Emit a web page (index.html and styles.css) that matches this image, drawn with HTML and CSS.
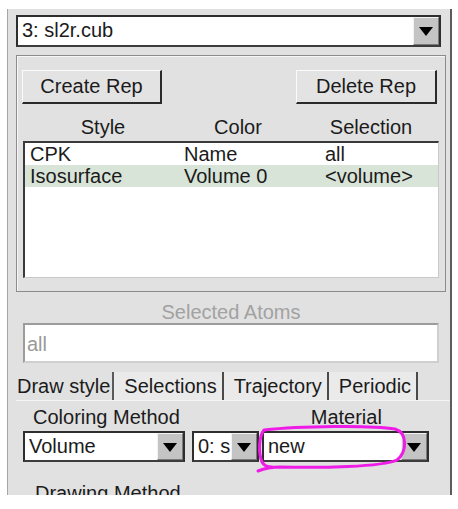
FILE: index.html
```html
<!DOCTYPE html>
<html>
<head>
<meta charset="utf-8">
<link rel="stylesheet" href="styles.css">
</head>
<body>
<div class="panel">
  <div class="combo top-combo"><span class="val">3: sl2r.cub</span><span class="arrow"><i class="tri"></i></span></div>
  <div class="group">
    <div class="btnrow">
      <div class="btn create">Create Rep</div>
      <div class="btn delete">Delete Rep</div>
    </div>
    <div class="heads"><span>Style</span><span>Color</span><span>Selection</span></div>
    <div class="list">
      <div class="row"><span>CPK</span><span>Name</span><span>all</span></div>
      <div class="row sel"><span>Isosurface</span><span>Volume 0</span><span>&lt;volume&gt;</span></div>
    </div>
  </div>
  <div class="selatoms">Selected Atoms</div>
  <div class="entry">all</div>
  <div class="tabs">
    <div class="tab active">Draw style</div>
    <div class="tab">Selections</div>
    <div class="tab">Trajectory</div>
    <div class="tab">Periodic</div>
  </div>
  <div class="labels"><span class="lbl-color">Coloring Method</span><span class="lbl-mat">Material</span></div>
  <div class="combos">
    <div class="combo c1"><span class="val">Volume</span><span class="arrow"><i class="tri"></i></span></div>
    <div class="combo c2"><span class="val">0: s</span><span class="arrow"><i class="tri"></i></span></div>
    <div class="combo c3"><span class="val">new</span><span class="arrow"><i class="tri"></i></span></div>
  </div>
  <div class="drawlabel">Drawing Method</div>
</div>
<svg class="annot" width="458" height="509" viewBox="0 0 458 509">
  <path d="M264 430 C300 426 372 425 395 429 C408 433 407 452 397 460 C382 467 320 468 280 467 C270 467 263 469 258 471 M264 430 C259 436 258 452 262 462 C264 466 268 467 272 467" fill="none" stroke="#ee1ce6" stroke-width="3" stroke-linecap="round"/>
</svg>
</body>
</html>
```
FILE: styles.css
```css
html, body {
  margin: 0;
  padding: 0;
  background: #ffffff;
}
body {
  width: 458px;
  height: 509px;
  position: relative;
  overflow: hidden;
  font-family: "Liberation Sans", Arial, sans-serif;
  font-size: 20px;
  color: #1b1b1b;
}
.panel {
  box-sizing: border-box;
  margin: 9px 0 0 7px;
  width: 445px;
  height: 486px;
  background: #e1e1e1;
  border-left: 1px solid #a6a6a6;
  border-right: 2px solid #5c5c5c;
  padding-left: 8px;
  overflow: hidden;
}
.combo {
  box-sizing: border-box;
  display: flex;
  background: #ffffff;
  border: 2px solid #2e2e2e;
  border-bottom-color: #3c3c3c;
}
.combo .val {
  flex: 1;
  padding-left: 4px;
  line-height: 27px;
  white-space: nowrap;
  overflow: hidden;
}
.combo .arrow {
  box-sizing: border-box;
  width: 26px;
  background: #c4c4c4;
  border-left: 1px solid #f2f2f2;
  border-top: 1px solid #f2f2f2;
  border-right: 1px solid #7a7a7a;
  border-bottom: 1px solid #7a7a7a;
  display: flex;
  align-items: center;
  justify-content: center;
}
.tri {
  width: 0;
  height: 0;
  border-left: 7px solid transparent;
  border-right: 7px solid transparent;
  border-top: 9px solid #000;
  margin-top: 1px;
}
.top-combo {
  margin-top: 6px;
  width: 425px;
  height: 32px;
}
.group {
  box-sizing: border-box;
  margin-top: 8px;
  width: 430px;
  height: 237px;
  border: 1px solid #8c8c8c;
  box-shadow: inset 1px 1px 0 #f7f7f7;
  padding: 14px 6px 0 6px;
}
.btnrow {
  display: flex;
  justify-content: space-between;
  margin-left: -1px;
  margin-right: 2px;
}
.btn {
  box-sizing: border-box;
  height: 34px;
  line-height: 30px;
  text-align: center;
  background: #e3e3e3;
  border: 1px solid;
  border-color: #fbfbfb #2a2a2a #2a2a2a #fbfbfb;
  border-right-width: 2px;
  border-bottom-width: 2px;
}
.btn.create { width: 140px; }
.btn.delete { width: 141px; }
.heads {
  display: grid;
  grid-template-columns: 160px 110px 156px;
  margin-top: 12px;
  line-height: 22px;
  text-align: center;
  white-space: nowrap;
}
.list {
  box-sizing: border-box;
  margin-top: 3px;
  width: 416px;
  height: 137px;
  background: #ffffff;
  border: 2px solid #3a3a3a;
  border-right: 1px solid #c9c9c9;
  border-bottom: 1px solid #c9c9c9;
}
.row {
  display: grid;
  grid-template-columns: 154px 141px 1fr;
  padding-left: 5px;
  height: 22px;
  line-height: 22px;
  white-space: nowrap;
}
.row.sel {
  background: #d9e4d8;
}
.selatoms {
  margin-top: 9px;
  margin-left: 7px;
  width: 416px;
  line-height: 22px;
  text-align: center;
  color: #a2a2a2;
}
.entry {
  box-sizing: border-box;
  margin-left: 7px;
  width: 416px;
  height: 40px;
  background: #ffffff;
  border: 2px solid #cfcfcf;
  border-top-color: #9c9c9c;
  border-left-color: #9c9c9c;
  color: #9a9a9a;
  padding-left: 2px;
  line-height: 38px;
}
.tabs {
  display: flex;
  margin-top: 9px;
  height: 29px;
  border-bottom: 1px solid #f4f4f4;
  box-sizing: border-box;
}
.tab {
  padding: 0 5px 0 10px;
  line-height: 28px;
  border-right: 2px solid #4a4a4a;
  background: #eaeaea;
  white-space: nowrap;
}
.tab.active {
  padding: 0 2px 0 1px;
  background: #e1e1e1;
  border-right-color: #5a5a5a;
}
.labels {
  margin-top: 5px;
  height: 22px;
  line-height: 22px;
  white-space: nowrap;
}
.lbl-color {
  margin-left: 17px;
}
.lbl-mat {
  margin-left: 131px;
}
.combos {
  display: flex;
  margin-top: 3px;
  margin-left: 7px;
}
.combos .combo {
  height: 31px;
}
.combos .combo .val {
  line-height: 26px;
}
.c1 { width: 162px; }
.c2 { width: 67px; margin-left: 7px; }
.c3 { width: 167px; margin-left: 3px; }
.drawlabel {
  margin-top: 20px;
  margin-left: 19px;
  line-height: 22px;
}
.annot {
  position: absolute;
  left: 0;
  top: 0;
  pointer-events: none;
}
```
